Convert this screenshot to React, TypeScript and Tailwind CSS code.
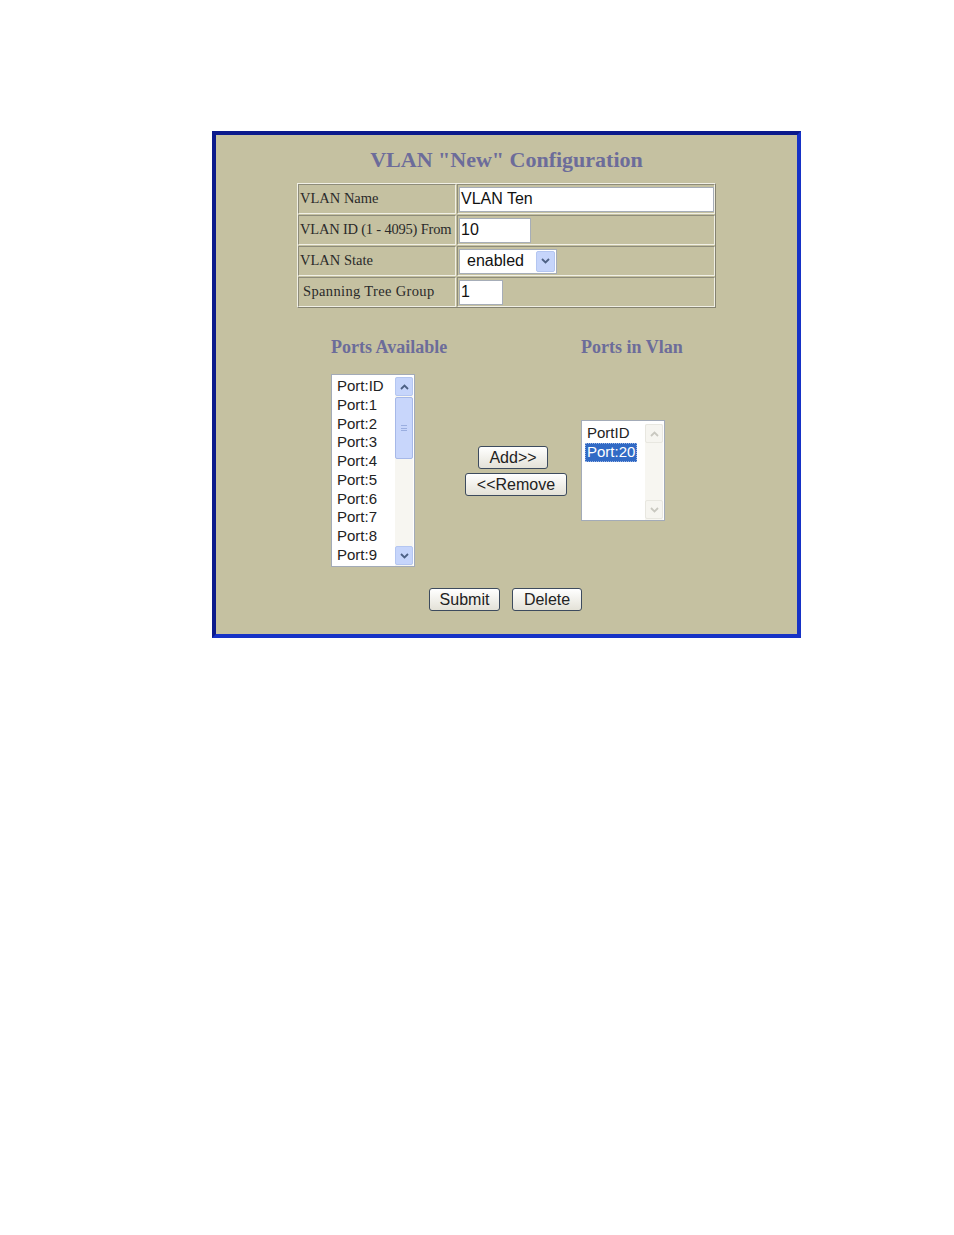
import { ReactNode } from 'react';

const serif = { fontFamily: '"Liberation Serif", "Times New Roman", serif' };
const sans = { fontFamily: '"Liberation Sans", Arial, sans-serif' };

function Cell({ children, className = '' }: { children?: ReactNode; className?: string }) {
  return (
    <div
      className={`flex items-center whitespace-nowrap border border-t-[#8e8c7a] border-l-[#8e8c7a] border-b-[#f1f0e6] border-r-[#f1f0e6] ${className}`}
    >
      {children}
    </div>
  );
}

function TextBox({ value, width }: { value: string; width: string }) {
  return (
    <div
      className={`${width} h-[25px] bg-white border border-[#a6adb8] flex items-center pl-[1px] text-[16px] text-[#111]`}
      style={sans}
    >
      {value}
    </div>
  );
}

function Arrow({ up, faded }: { up?: boolean; faded?: boolean }) {
  return (
    <svg width="9" height="6" viewBox="0 0 9 6">
      <path
        d={up ? 'M1 5 L4.5 1.5 L8 5' : 'M1 1 L4.5 4.5 L8 1'}
        fill="none"
        stroke={faded ? '#c9c8c0' : '#4d6185'}
        strokeWidth="1.8"
      />
    </svg>
  );
}

function ScrollButton({ up, faded }: { up?: boolean; faded?: boolean }) {
  return (
    <div
      className={`w-[18px] h-[19px] rounded-[2px] border flex items-center justify-center ${
        faded ? 'border-[#e8e7e0] bg-[#f6f5f0]' : 'border-[#b4c6f1] bg-[#c6d5fb]'
      }`}
    >
      <Arrow up={up} faded={faded} />
    </div>
  );
}

function PortButton({ label, width }: { label: string; width: string }) {
  return (
    <button
      className={`${width} h-[23px] rounded-[3px] border border-[#3d4b5e] bg-linear-to-b from-white to-[#e4e2d8] text-[16px] leading-none text-[#222]`}
      style={sans}
    >
      {label}
    </button>
  );
}

const available = ['Port:ID', 'Port:1', 'Port:2', 'Port:3', 'Port:4', 'Port:5', 'Port:6', 'Port:7', 'Port:8', 'Port:9'];

export default function App() {
  return (
    <div className="w-[954px] h-[1235px] bg-white pt-[131px] pl-[212px]">
      <div className="w-[589px] h-[507px] bg-[#c5c1a1] border-[4px] border-t-[#0b1a8c] border-l-[#0b1a8c] border-r-[#1632c6] border-b-[#1632c6] flex flex-col items-center">
        <h1 className="pt-[12px] text-[22px] leading-[25px] font-bold text-[#6c6c9a]" style={serif}>
          VLAN "New" Configuration
        </h1>

        <div
          className="mt-[11px] w-[419px] grid grid-cols-[158px_1fr] gap-[1px] border border-t-[#f1f0e6] border-l-[#f1f0e6] border-b-[#858371] border-r-[#858371] text-[14.5px] text-[#2a2a2a]"
          style={serif}
        >
          <Cell className="h-[30px] pl-[1px]">VLAN Name</Cell>
          <Cell className="h-[30px] pl-[1px]">
            <TextBox value="VLAN Ten" width="w-[255px]" />
          </Cell>
          <Cell className="h-[30px] pl-[1px] tracking-[-0.2px]">VLAN ID (1 - 4095) From</Cell>
          <Cell className="h-[30px] pl-[1px]">
            <TextBox value="10" width="w-[72px]" />
          </Cell>
          <Cell className="h-[30px] pl-[1px]">VLAN State</Cell>
          <Cell className="h-[30px] pl-[1px]">
            <div
              className="w-[98px] h-[25px] bg-white border border-[#a6adb8] flex items-center justify-between pl-[7px] pr-[1px] text-[16px] text-[#111]"
              style={sans}
            >
              enabled
              <div className="w-[19px] h-[21px] rounded-[2px] border border-[#b4c6f1] bg-[#c6d5fb] flex items-center justify-center">
                <Arrow />
              </div>
            </div>
          </Cell>
          <Cell className="h-[30px] pl-[4px] tracking-[0.35px]">Spanning Tree Group</Cell>
          <Cell className="h-[30px] pl-[1px]">
            <TextBox value="1" width="w-[44px]" />
          </Cell>
        </div>

        <div className="mt-[29px] w-full pl-[115px] flex flex-col">
          <div className="flex text-[18px] leading-[21px] font-bold text-[#6c6c9a]" style={serif}>
            <div className="w-[250px]">Ports Available</div>
            <div>Ports in Vlan</div>
          </div>

          <div className="mt-[16px] flex items-center">
            <div className="w-[84px] h-[193px] bg-white border border-[#a3abb8] flex justify-between pt-[2px] pl-[5px] pr-[1px]">
              <div className="text-[15px] leading-[18.75px] text-[#222]" style={sans}>
                {available.map((p) => (
                  <div key={p}>{p}</div>
                ))}
              </div>
              <div className="w-[18px] flex flex-col justify-between pb-[1px] bg-[#f7f6f1]">
                <div className="flex flex-col gap-[1px]">
                  <ScrollButton up />
                  <div className="w-[18px] h-[62px] rounded-[2px] border border-[#a6b8e8] bg-[#c8d6fb] flex items-center justify-center">
                    <div className="w-[6px] h-[6px] border-y border-[#9aaee0] flex items-center">
                      <div className="w-full h-px bg-[#9aaee0]" />
                    </div>
                  </div>
                </div>
                <ScrollButton />
              </div>
            </div>

            <div className="w-[166px] flex flex-col gap-[4px] pl-[50px]">
              <div className="pl-[13px]">
                <PortButton label="Add>>" width="w-[70px]" />
              </div>
              <PortButton label="<<Remove" width="w-[102px]" />
            </div>

            <div className="w-[84px] h-[101px] bg-white border border-[#a3abb8] flex justify-between pt-[3px] pl-[3px] pr-[1px]">
              <div className="text-[15px] leading-[18.75px] text-[#222]" style={sans}>
                <div className="pl-[2px]">PortID</div>
                <div className="px-[2px] bg-[#316ac5] text-white outline-1 outline-dotted outline-[#9db6e4] -outline-offset-1">
                  Port:20
                </div>
              </div>
              <div className="w-[18px] flex flex-col justify-between pb-[1px] bg-[#f7f6f1]">
                <ScrollButton up faded />
                <ScrollButton faded />
              </div>
            </div>
          </div>
        </div>

        <div className="mt-[21px] flex gap-[12px] pr-[2px]">
          <PortButton label="Submit" width="w-[71px]" />
          <PortButton label="Delete" width="w-[70px]" />
        </div>
      </div>
    </div>
  );
}
